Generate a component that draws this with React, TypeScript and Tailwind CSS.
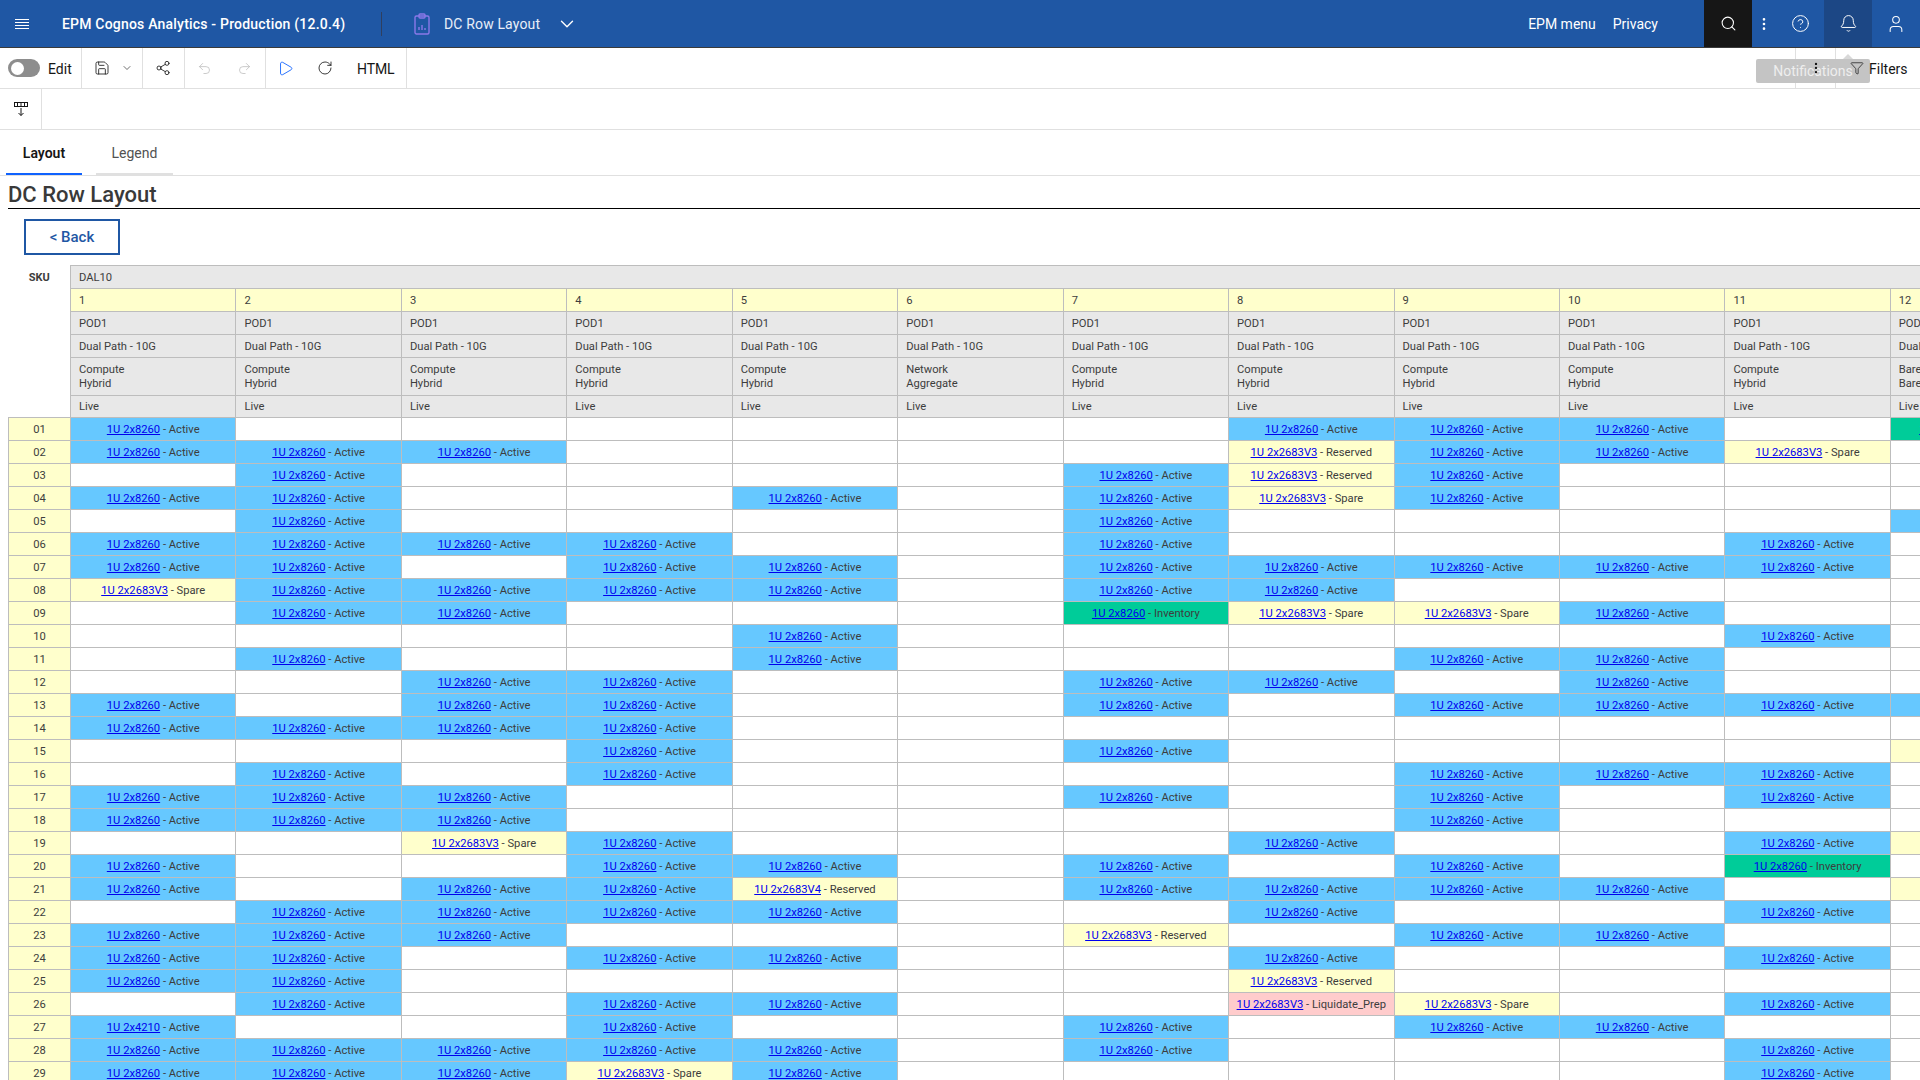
import React from "react";
import { ChevronDown, Save, Share2, Undo2, Redo2, Play, RotateCw, Search, EllipsisVertical, CircleHelp, Bell, User, Funnel } from "lucide-react";

const rows: [string, string][] = [
  ["01", "A......AAA.I"],
  ["02", "AAA....RAAS."],
  ["03", ".A....ARA..U"],
  ["04", "AA..A.ASA..."],
  ["05", ".A....A....A"],
  ["06", "AAAA..A...A."],
  ["07", "AA.AA.AAAAA."],
  ["08", "SAAAA.AA...."],
  ["09", ".AA...ISSA.."],
  ["10", "....A.....A."],
  ["11", ".A..A...AA.."],
  ["12", "..AA..AA.A.."],
  ["13", "A.AA..A.AAAA"],
  ["14", "AAAA........"],
  ["15", "...A..A....S"],
  ["16", ".A.A....AAA."],
  ["17", "AAA...A.A.A."],
  ["18", "AAA.....A..."],
  ["19", "..SA...A..AS"],
  ["20", "A..AA.A.A.I."],
  ["21", "A.AAV.AAAA.S"],
  ["22", ".AAAA..A..A."],
  ["23", "AAA...R.AA.."],
  ["24", "AA.AA..A..A."],
  ["25", "AA.....R...."],
  ["26", ".A.AA..LS.A."],
  ["27", "F..A..A.AA.."],
  ["28", "AAAAA.A...A."],
  ["29", "AAASA.....A."],
];

const kinds: Record<string, { link: string; status: string; bg: string }> = {
  A: { link: "1U 2x8260", status: "Active", bg: "bg-[#66c8ff]" },
  F: { link: "1U 2x4210", status: "Active", bg: "bg-[#66c8ff]" },
  S: { link: "1U 2x2683V3", status: "Spare", bg: "bg-[#ffffcc]" },
  R: { link: "1U 2x2683V3", status: "Reserved", bg: "bg-[#ffffcc]" },
  V: { link: "1U 2x2683V4", status: "Reserved", bg: "bg-[#ffffcc]" },
  I: { link: "1U 2x8260", status: "Inventory", bg: "bg-[#00cc99]" },
  L: { link: "1U 2x2683V3", status: "Liquidate_Prep", bg: "bg-[#ffcccc]" },
  U: { link: "1U 2x2683V3", status: "Other", bg: "bg-white" },
};

const cols = Array.from({ length: 12 }, (_, i) => i + 1);
const headCell = "border border-[#bdbdbd] bg-[#e8e8e8] pl-[8px] pt-px text-left font-normal align-middle";

function Sep() {
  return <div className="h-full w-px shrink-0 bg-[#e0e0e0]" />;
}

export default function App() {
  return (
    <div className="relative h-[1080px] w-[1920px] overflow-hidden bg-white font-['Roboto','Liberation_Sans',sans-serif] text-[#161616]">
      {/* Top bar */}
      <header className="flex h-[48px] items-center border-b border-[#3a3a3a] bg-[#1f57a4] text-white">
        <div className="flex w-[62px] justify-start pl-[15px]">
          <svg width="14" height="14" viewBox="0 0 14 14" fill="none" stroke="white" strokeWidth="1">
            <path d="M0 2.5h14M0 5.5h14M0 8.5h14M0 11.5h14" />
          </svg>
        </div>
        <div className="w-[319px] pt-px text-[14px] font-medium tracking-[0.2px]">EPM Cognos Analytics - Production (12.0.4)</div>
        <div className="h-[24px] w-px bg-[#2f3f5f]" />
        <svg className="ml-[32px]" width="16" height="22" viewBox="0 0 16 22" fill="none" stroke="#8a78e8" strokeWidth="1.4">
          <rect x="1" y="3" width="14" height="18" rx="1.5" />
          <rect x="5" y="1" width="6" height="4" rx="1" />
          <path d="M5 17v-3M8 17v-5M11 17v-2" />
        </svg>
        <div className="ml-[14px] pt-px text-[14px] tracking-[0.15px] text-[#e8eef8]">DC Row Layout</div>
        <ChevronDown className="ml-[16px]" size={22} strokeWidth={1.5} />
        <div className="flex-1" />
        <div className="pt-px text-[14px]">EPM menu</div>
        <div className="ml-[17px] pt-px text-[14px]">Privacy</div>
        <div className="ml-[46px] flex h-full w-[48px] items-center justify-center bg-[#161616]">
          <Search size={17} strokeWidth={1.5} />
        </div>
        <div className="flex h-full w-[24px] items-center justify-center">
          <EllipsisVertical size={16} strokeWidth={2} />
        </div>
        <div className="flex h-full w-[48px] items-center justify-center">
          <CircleHelp size={19} strokeWidth={1.25} />
        </div>
        <div className="flex h-full w-[48px] items-center justify-center bg-[#1c4785]">
          <Bell size={19} strokeWidth={1.25} />
        </div>
        <div className="flex h-full w-[48px] items-center justify-center">
          <User size={20} strokeWidth={1.25} />
        </div>
      </header>

      {/* Toolbar */}
      <div className="flex h-[41px] items-center border-b border-[#e0e0e0] text-[14px]">
        <div className="flex h-full w-[81px] items-center pl-[8px]">
          <div className="flex h-[18px] w-[32px] items-center rounded-full bg-[#8d8d8d] pl-[3px]">
            <div className="h-[13px] w-[13px] rounded-full bg-white" />
          </div>
          <span className="ml-[8px] pt-[2px]">Edit</span>
        </div>
        <Sep />
        <div className="flex h-full w-[60px] items-center pl-[12px]">
          <Save size={16} strokeWidth={1.25} />
          <ChevronDown className="ml-[11px]" size={12} strokeWidth={1.25} />
        </div>
        <Sep />
        <div className="flex h-full w-[41px] items-center justify-center pr-[2px]">
          <Share2 size={16} strokeWidth={1.25} />
        </div>
        <Sep />
        <div className="flex h-full w-[80px] items-center justify-center gap-[25px] pr-[2px] text-[#bdbdbd]">
          <Undo2 size={15} strokeWidth={1.25} />
          <Redo2 size={15} strokeWidth={1.25} />
        </div>
        <Sep />
        <div className="flex h-full w-[140px] items-center pl-[11px]">
          <Play size={17} strokeWidth={1.25} className="text-[#0f62fe]" />
          <RotateCw size={16} strokeWidth={1.25} className="ml-[23px]" />
          <span className="ml-[24px] pt-[2px] tracking-[-0.1px]">HTML</span>
        </div>
        <Sep />
        <div className="flex-1" />
        <div className="h-full w-px bg-[#e0e0e0]" />
        <div className="relative z-10 flex h-full w-[39px] items-center justify-center">
          <EllipsisVertical size={14} strokeWidth={2} />
        </div>
        <div className="h-full w-px bg-[#e0e0e0]" />
        <div className="relative z-10 flex h-full w-[84px] items-center pl-[14px]">
          <Funnel size={14} strokeWidth={1.25} />
          <span className="ml-[5px] pt-[2px]">Filters</span>
        </div>
      </div>

      {/* Second toolbar */}
      <div className="flex h-[41px] items-center border-b border-[#e0e0e0]">
        <div className="flex h-full w-[42px] items-center justify-center border-r border-[#e0e0e0]">
          <svg width="14" height="16" viewBox="0 0 14 16" fill="none" stroke="#161616" strokeWidth="1">
            <rect x="0.5" y="1.5" width="13" height="4" />
            <path d="M3.5 1.5v4M7 1.5v4M10.5 1.5v4M7 7v7.5M4.5 12l2.5 2.5L9.5 12" />
          </svg>
        </div>
      </div>

      {/* Tabs */}
      <div className="flex h-[46px] border-b border-[#e0e0e0] pl-[6px] text-[14px]">
        <div className="flex h-[45px] w-[76px] items-center justify-center border-b-2 border-[#0f62fe] pt-[4px] font-semibold">Layout</div>
        <div className="ml-[14px] flex h-[45px] w-[77px] items-center justify-center border-b-2 border-[#e0e0e0] pt-[4px] text-[#525252]">Legend</div>
      </div>

      {/* Title */}
      <div className="ml-[8px] flex h-[33px] items-center border-b border-black pt-[5px] text-[22px] font-medium leading-none text-[#393939]">
        DC Row Layout
      </div>

      <div className="ml-[24px] mt-[10px] flex h-[36px] w-[96px] items-center justify-center border-2 border-[#1f57a4] text-[15px] font-medium text-[#1f57a4]">
        &lt; Back
      </div>

      {/* Table */}
      <table className="ml-[8px] mt-[10px] w-[2047.4px] table-fixed border-collapse text-[11.2px] leading-[14px] text-[#3d3d3d]">
        <colgroup>
          <col className="w-[62px]" />
          {cols.map((c) => (
            <col key={c} className="w-[165.45px]" />
          ))}
        </colgroup>
        <thead>
          <tr className="h-[23px]">
            <th className="pt-px text-center align-middle text-[11px] font-bold">SKU</th>
            <th colSpan={12} className={headCell}>DAL10</th>
          </tr>
          <tr className="h-[23px]">
            <th />
            {cols.map((c) => (
              <th key={c} className="border border-[#bdbdbd] bg-[#ffffcc] pl-[8px] pt-px text-left font-normal">{c}</th>
            ))}
          </tr>
          <tr className="h-[23px]">
            <th />
            {cols.map((c) => (
              <th key={c} className={headCell}>POD1</th>
            ))}
          </tr>
          <tr className="h-[23px]">
            <th />
            {cols.map((c) => (
              <th key={c} className={headCell}>Dual Path - 10G</th>
            ))}
          </tr>
          <tr className="h-[38px]">
            <th />
            {cols.map((c) => (
              <th key={c} className={headCell}>
                {c === 6 ? "Network" : c === 12 ? "Bare Metal" : "Compute"}
                <br />
                {c === 6 ? "Aggregate" : c === 12 ? "Bare Metal" : "Hybrid"}
              </th>
            ))}
          </tr>
          <tr className="h-[22px]">
            <th />
            {cols.map((c) => (
              <th key={c} className={headCell}>Live</th>
            ))}
          </tr>
        </thead>
        <tbody>
          {rows.map(([label, data]) => (
            <tr key={label} className="h-[23px]">
              <td className="border border-[#bdbdbd] bg-[#ffffcc] pt-px text-center">{label}</td>
              {data.split("").map((code, i) => {
                const kind = kinds[code];
                return (
                  <td key={i} className={`border border-[#bdbdbd] pt-px text-center whitespace-nowrap ${kind ? kind.bg : "bg-white"}`}>
                    {kind ? (
                      <>
                        <a className="text-[#0000ee] underline">{kind.link}</a> - {kind.status}
                      </>
                    ) : null}
                  </td>
                );
              })}
            </tr>
          ))}
        </tbody>
      </table>

      {/* Tooltip */}
      <div className="absolute left-[1756px] top-[59px] flex h-[24px] w-[114px] items-center justify-center rounded-[2px] bg-[#c4c4c4] text-[14px] text-[#eeeeee]">
        <div className="absolute left-[87px] top-[-5px] h-0 w-0 border-x-[5px] border-b-[5px] border-x-transparent border-b-[#d8d8d8]" />
        Notifications
      </div>
    </div>
  );
}
